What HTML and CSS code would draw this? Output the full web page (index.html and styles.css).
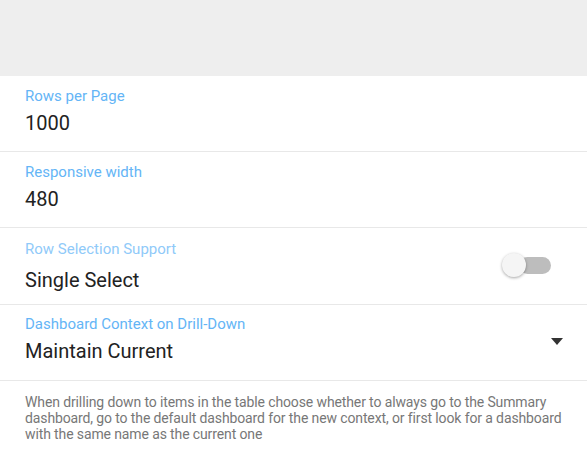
FILE: index.html
```html
<!DOCTYPE html>
<html>
<head>
<meta charset="utf-8">
<link rel="stylesheet" href="styles.css">
</head>
<body>
<div class="header"></div>
<div class="field field-text">
  <div class="label">Rows per Page</div>
  <div class="value">1000</div>
</div>
<div class="field field-text">
  <div class="label">Responsive width</div>
  <div class="value">480</div>
</div>
<div class="field field-row field-toggle">
  <div class="field-main">
    <div class="label label-muted">Row Selection Support</div>
    <div class="value">Single Select</div>
  </div>
  <div class="toggle"><div class="track"></div><div class="thumb"></div></div>
</div>
<div class="field field-row field-select">
  <div class="field-main">
    <div class="label">Dashboard Context on Drill-Down</div>
    <div class="value">Maintain Current</div>
  </div>
  <div class="caret"></div>
</div>
<div class="desc">When drilling down to items in the table choose whether to always go to the Summary dashboard, go to the default dashboard for the new context, or first look for a dashboard with the same name as the current one</div>
</body>
</html>
```
FILE: styles.css
```css
html, body {
  margin: 0;
  padding: 0;
  background: #ffffff;
  font-family: Roboto, "Liberation Sans", sans-serif;
}
.header {
  height: 76px;
  background: #eeeeee;
}
.field {
  border-bottom: 1px solid #e8e8e8;
  padding: 0 25px;
  box-sizing: border-box;
  height: 76px;
}
.field-row {
  display: flex;
  align-items: flex-start;
  padding-right: 0;
}
.field-main {
  flex: 1;
}
.label {
  font-size: 15px;
  line-height: 18px;
  color: #64b5f6;
}
.label-muted {
  color: #90caf9;
}
.value {
  font-size: 20px;
  line-height: 24px;
  color: #222222;
}
.field-text .label {
  padding-top: 11px;
}
.field-text .value {
  margin-top: 6px;
}
.field-toggle {
  height: 77px;
}
.field-toggle .label {
  padding-top: 12px;
}
.field-toggle .value {
  margin-top: 10px;
}
.field-select .label {
  padding-top: 10px;
}
.field-select .value {
  margin-top: 6px;
}
.toggle {
  position: relative;
  width: 49px;
  height: 24px;
  margin-top: 25px;
  margin-right: 36px;
}
.track {
  position: absolute;
  left: 17px;
  top: 4px;
  width: 32px;
  height: 17px;
  border-radius: 9px;
  background: #bdbdbd;
}
.thumb {
  position: absolute;
  left: 0;
  top: 0;
  width: 24px;
  height: 24px;
  border-radius: 50%;
  background: #f5f5f5;
  box-shadow: 0 1px 3px rgba(0,0,0,0.35);
}
.caret {
  width: 0;
  height: 0;
  border-left: 6px solid transparent;
  border-right: 6px solid transparent;
  border-top: 7px solid #333333;
  margin-top: 33px;
  margin-right: 24px;
}
.desc {
  padding: 13px 20px 0 25px;
  font-size: 14px;
  line-height: 16px;
  letter-spacing: -0.12px;
  color: #777777;
}
```
